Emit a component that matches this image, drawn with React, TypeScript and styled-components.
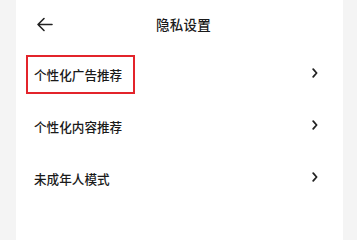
import React from 'react'
import styled, { createGlobalStyle } from 'styled-components'

const GlobalStyle = createGlobalStyle`
    html, body {
        margin: 0;
        padding: 0;
        height: 100%;
        overflow: hidden;
        background: #f4f4f4;
        font-family: "Noto Sans CJK SC", "Noto Sans", sans-serif;
    }
`

const Page = styled.div`
    display: flex;
    width: 100vw;
    height: 100vh;
    padding: 0 14px 0 16px;
    box-sizing: border-box;
    background: #f4f4f4;
`

const Panel = styled.div`
    flex: 1;
    display: flex;
    flex-direction: column;
    background: #ffffff;
`

const Header = styled.div`
    position: relative;
    display: flex;
    align-items: center;
    justify-content: center;
    height: 48px;
`

const BackButton = styled.div`
    position: absolute;
    left: 20px;
    top: 17px;
    display: flex;
`

const Title = styled.h1`
    margin: 0;
    font-size: 13.5px;
    font-weight: 500;
    color: #1a1a1a;
    letter-spacing: 0.2px;
    transform: translateX(4px);
`

const Row = styled.div`
    display: flex;
    align-items: center;
    height: 52px;
    padding: 0 25px 0 10px;
`

const Label = styled.span<{ $highlighted?: boolean }>`
    display: inline-flex;
    align-items: center;
    height: 39px;
    padding: 1px 11px 0 6px;
    border: 2px solid ${({ $highlighted }) => ($highlighted ? '#e3242b' : 'transparent')};
    box-sizing: border-box;
    font-size: 12.6px;
    font-weight: 500;
    color: #1a1a1a;
`

const Chevron = styled.svg`
    margin-left: auto;
    margin-top: -2px;
`

const items = [
    { label: '个性化广告推荐', highlighted: true },
    { label: '个性化内容推荐' },
    { label: '未成年人模式' },
]

const App = () => {
    return (
        <>
            <GlobalStyle />
            <Page>
                <Panel>
                    <Header>
                        <BackButton>
                            <svg width="17" height="15" viewBox="0 0 17 15" fill="none">
                                <path d="M16 7.5H2M8 1.5L2 7.5L8 13.5" stroke="#222" strokeWidth="1.6" strokeLinecap="round" strokeLinejoin="round" />
                            </svg>
                        </BackButton>
                        <Title>隐私设置</Title>
                    </Header>
                    {items.map(item => (
                        <Row key={item.label}>
                            <Label $highlighted={item.highlighted}>{item.label}</Label>
                            <Chevron width="6" height="10" viewBox="0 0 6 10" fill="none">
                                <path d="M1.2 1.2L4.6 5L1.2 8.8" stroke="#222" strokeWidth="1.8" strokeLinecap="round" strokeLinejoin="round" />
                            </Chevron>
                        </Row>
                    ))}
                </Panel>
            </Page>
        </>
    )
}

export default App
